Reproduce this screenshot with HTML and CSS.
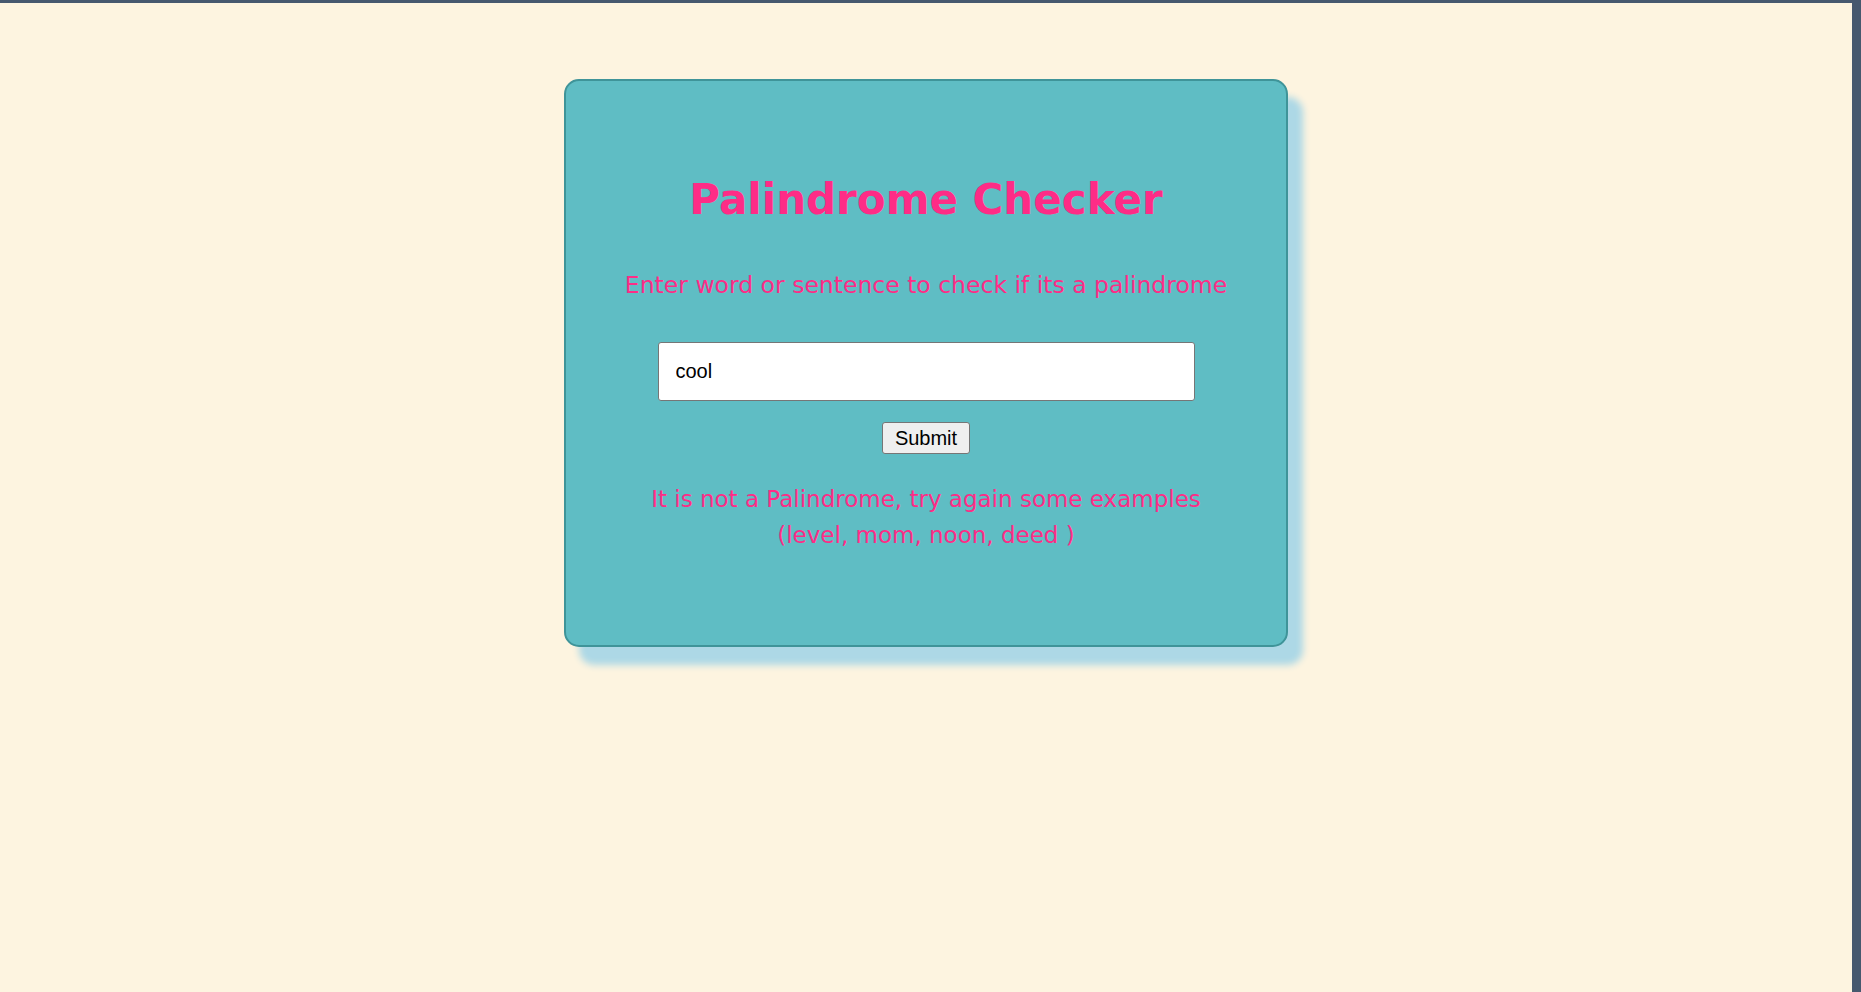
FILE: index.html
```html
<!DOCTYPE html>
<html lang="en">
<head>
<meta charset="utf-8">
<title>Palindrome Checker</title>
<link rel="stylesheet" href="styles.css">
</head>
<body>
<div class="page">
  <main class="card">
    <h1 class="title">Palindrome Checker</h1>
    <p class="subtitle">Enter word or sentence to check if its a palindrome</p>
    <form class="form">
      <input class="text-input" type="text" value="cool">
      <button class="submit" type="button">Submit</button>
    </form>
    <p class="result">It is not a Palindrome, try again some examples<br>(level, mom, noon, deed )</p>
  </main>
</div>
</body>
</html>
```
FILE: styles.css
```css
html, body {
  margin: 0;
  padding: 0;
}
body {
  background: #46586e;
}
.page {
  box-sizing: border-box;
  height: 992px;
  border-top: 3px solid #46586e;
  border-right: 9px solid #46586e;
  background: #fdf4e0;
  padding-top: 76px;
  overflow: hidden;
}
.card {
  box-sizing: border-box;
  width: 724px;
  height: 568px;
  margin: 0 auto;
  background: #5fbdc4;
  border: 2px solid #3f9499;
  border-radius: 15px;
  box-shadow: 15px 18px 7px #add8e6;
  padding-top: 89px;
  display: flex;
  flex-direction: column;
  align-items: center;
  font-family: "Comic Sans MS", "DejaVu Sans", sans-serif;
  color: #fe2c86;
  text-align: center;
}
.title {
  margin: 0;
  font-size: 42px;
  line-height: 60px;
  font-weight: bold;
}
.subtitle {
  margin: 40px 0 0;
  font-size: 23.5px;
  line-height: 30px;
}
.form {
  margin: 42px 0 0;
  display: flex;
  flex-direction: column;
  align-items: center;
}
.text-input {
  box-sizing: border-box;
  width: 537px;
  height: 59px;
  padding: 0 17px;
  border: 1px solid #767676;
  border-radius: 3px;
  background: #fff;
  font-family: "Liberation Sans", Arial, sans-serif;
  font-size: 20px;
  color: #000;
}
.submit {
  box-sizing: border-box;
  margin-top: 21px;
  height: 32px;
  padding: 0 12px;
  border: 1px solid #767676;
  border-radius: 3px;
  background: #efefef;
  font-family: "Liberation Sans", Arial, sans-serif;
  font-size: 20px;
  color: #000;
}
.result {
  margin: 28px 0 0;
  font-size: 23px;
  line-height: 35.5px;
}
```
